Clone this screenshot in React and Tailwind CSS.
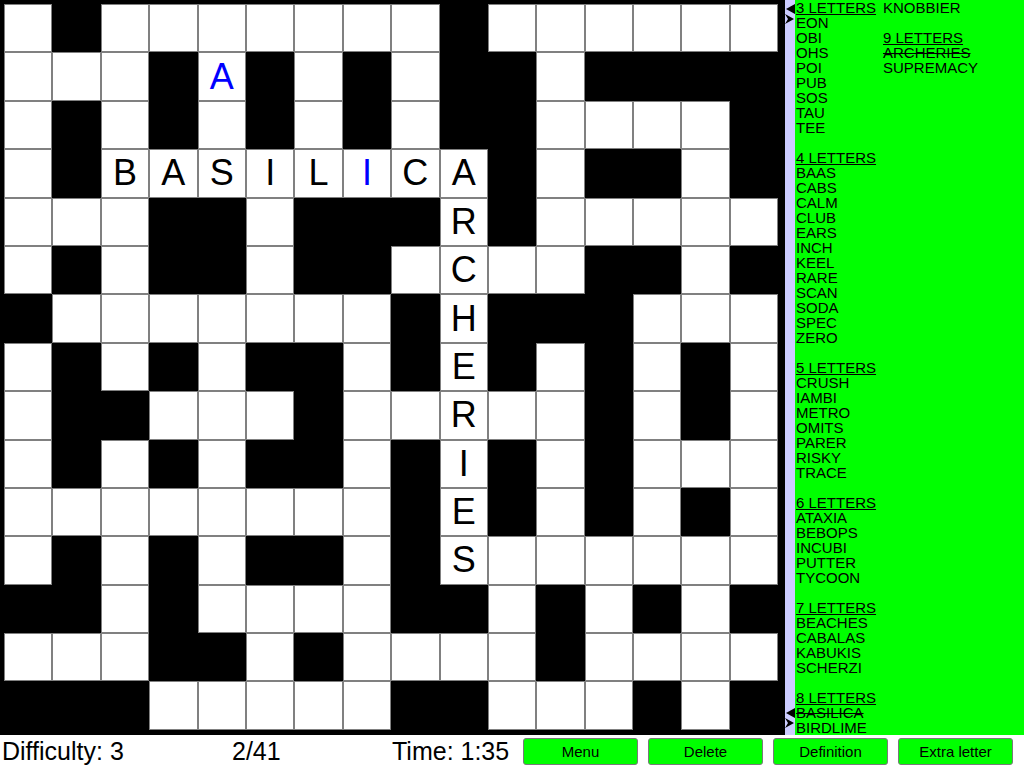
import React from 'react';

const GRID = [
  '.#.......#......',
  '...#a#.#.##.####',
  '.#.#.#.#.##....#',
  '.#BASILiCA#.##.#',
  '...##.###R#.....',
  '.#.##.##.C..##.#',
  '#.......#H###...',
  '.#.#.##.#E#.#.#.',
  '.##...#..R..#.#.',
  '.#.#.##.#I#.#...',
  '........#E#.#.#.',
  '.#.#.##.#S......',
  '##.#....##.#.#.#',
  '...##.#....#....',
  '###.....##...#.#',
];

const COL1 = [
  { h: '3 LETTERS' }, 'EON', 'OBI', 'OHS', 'POI', 'PUB', 'SOS', 'TAU', 'TEE', '',
  { h: '4 LETTERS' }, 'BAAS', 'CABS', 'CALM', 'CLUB', 'EARS', 'INCH', 'KEEL', 'RARE', 'SCAN', 'SODA', 'SPEC', 'ZERO', '',
  { h: '5 LETTERS' }, 'CRUSH', 'IAMBI', 'METRO', 'OMITS', 'PARER', 'RISKY', 'TRACE', '',
  { h: '6 LETTERS' }, 'ATAXIA', 'BEBOPS', 'INCUBI', 'PUTTER', 'TYCOON', '',
  { h: '7 LETTERS' }, 'BEACHES', 'CABALAS', 'KABUKIS', 'SCHERZI', '',
  { h: '8 LETTERS' }, { s: 'BASILICA' }, 'BIRDLIME',
];

const COL2 = ['KNOBBIER', '', { h: '9 LETTERS' }, { s: 'ARCHERIES' }, 'SUPREMACY'];

const WordLine = ({ item }) => {
  if (typeof item === 'string') return <div className="h-[15px]">{item}</div>;
  if (item.h) return <div className="h-[15px] underline underline-offset-[1px]">{item.h}</div>;
  return <div className="h-[15px] line-through">{item.s}</div>;
};

const Cell = ({ ch }) => {
  if (ch === '#') return <div className="bg-black" />;
  const blue = ch !== '.' && ch === ch.toLowerCase();
  return (
    <div
      className={`bg-white border border-[#808080] flex items-center justify-center text-[36px] leading-none ${
        blue ? 'text-[#0000ff]' : 'text-black'
      }`}
    >
      {ch === '.' ? '' : ch.toUpperCase()}
    </div>
  );
};

const Markers = () => (
  <svg width="10" height="20" viewBox="0 0 10 20" className="block">
    <polygon points="10,0 1,5 10,10" fill="black" />
    <polygon points="0,10 9,15 0,20 3,15" fill="black" />
  </svg>
);

export default function App() {
  const buttons = ['Menu', 'Delete', 'Definition', 'Extra letter'];

  return (
    <div className="w-[1024px] h-[768px] bg-white flex flex-col overflow-hidden font-['Liberation_Sans',Arial,sans-serif] text-black">
      {/* Board + word list */}
      <div className="h-[735px] flex">
        <div className="w-[785px] bg-black pt-[4px] pl-[4px]">
          <div className="grid grid-cols-[repeat(16,48.4px)] grid-rows-[repeat(15,48.4px)]">
            {GRID.map((row, r) =>
              row.split('').map((ch, c) => <Cell key={`${r}-${c}`} ch={ch} />)
            )}
          </div>
        </div>

        <div className="w-[10px] bg-[#ccccff] flex flex-col justify-between pt-[4px] pb-[7px]">
          <Markers />
          <Markers />
        </div>

        <div className="flex-1 bg-[#00ff00] flex pl-[1px] text-[15px] leading-[15px]">
          <div className="w-[87px]">
            {COL1.map((item, i) => (
              <WordLine key={i} item={item} />
            ))}
          </div>
          <div>
            {COL2.map((item, i) => (
              <WordLine key={i} item={item} />
            ))}
          </div>
        </div>
      </div>

      {/* Status bar */}
      <div className="flex-1 flex items-center text-[25px] leading-none">
        <div className="w-[232px] pl-[2px]">Difficulty: 3</div>
        <div className="w-[160px]">2/41</div>
        <div className="w-[131px]">Time: 1:35</div>
        <div className="flex gap-[10px]">
          {buttons.map((b) => (
            <button
              key={b}
              className="w-[115px] h-[27px] bg-[#00ff00] border border-[#7a7a7a] rounded-[3px] text-[15px] leading-none text-black"
            >
              {b}
            </button>
          ))}
        </div>
      </div>
    </div>
  );
}
